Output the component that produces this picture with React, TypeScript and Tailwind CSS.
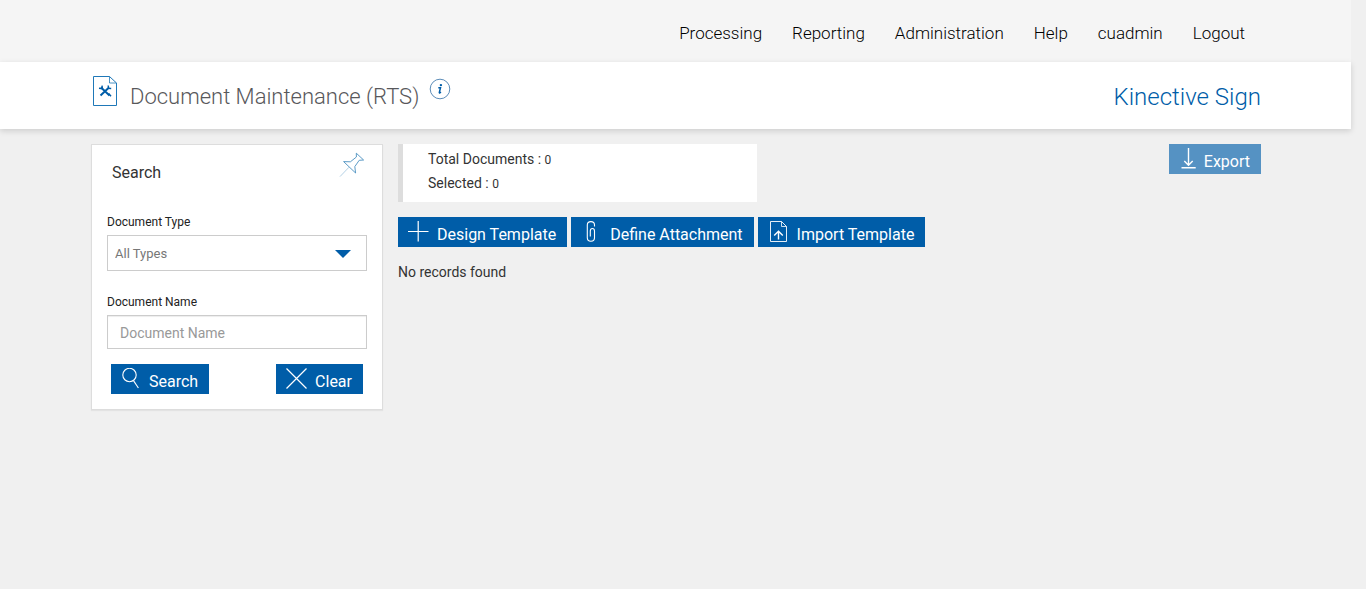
import { useState } from 'react'
import type { ReactNode } from 'react'

const navItems = ['Processing', 'Reporting', 'Administration', 'Help', 'cuadmin', 'Logout']

const documentTypes = ['All Types', 'Template', 'Attachment']

function IconButton({
  icon,
  children,
  type = 'button',
  disabled = false,
  onClick,
}: {
  icon: ReactNode
  children: ReactNode
  type?: 'button' | 'submit'
  disabled?: boolean
  onClick?: () => void
}) {
  return (
    <button
      type={type}
      disabled={disabled}
      onClick={onClick}
      className="flex h-[30px] items-start gap-2 bg-[#005da8] pr-[11px] pl-[10px] text-base text-white hover:bg-[#004c8a] disabled:bg-[#5592c3]"
    >
      <span className="mt-1">{icon}</span>
      <span className="mt-1 leading-7">{children}</span>
    </button>
  )
}

function ToolsDocumentIcon() {
  return (
    <svg width="26" height="30" viewBox="0 0 26 30" fill="none" stroke="#1f78b8" aria-hidden="true">
      <path d="M1.5 .5H17.5L24.5 7V29.5H1.5Z" />
      <path d="M17.5 .5V7H24.5" strokeWidth=".8" />
      <path d="M9 11.5L17.5 19.5M17 11.5L8.5 19.5" stroke="#005da8" strokeWidth="2" />
      <path d="M7 12.2L10.3 12.6L10 9.6M16.2 9.5L16.6 12.2L19.2 12.4M16.6 17.6L19 20.2" stroke="#005da8" strokeWidth="1.5" />
    </svg>
  )
}

function InfoIcon() {
  return (
    <svg width="22" height="22" viewBox="0 0 22 22" fill="none" aria-hidden="true">
      <circle cx="11" cy="11" r="9.8" stroke="#4a7fb0" strokeWidth=".9" />
      <circle cx="11.9" cy="7.1" r="1.2" fill="#005da8" />
      <path d="M9.3 9.8H11.5L10.3 14.6Q10.3 15.4 12 14.2" stroke="#005da8" strokeWidth="1.5" />
    </svg>
  )
}

function PinIcon() {
  return (
    <svg width="26" height="26" viewBox="0 0 26 26" fill="none" stroke="#4a90c0" strokeWidth=".9" aria-hidden="true">
      <path d="M17.3 1.2L24.6 8L20.2 8.3L15.8 14.6L16.6 21L4.6 9.6L11.4 9.8L17.4 5Z" />
      <path d="M10 15.2L1 24.6" strokeOpacity=".6" strokeWidth=".7" />
    </svg>
  )
}

function SearchIcon() {
  return (
    <svg width="20" height="22" viewBox="0 0 20 22" fill="none" stroke="currentColor" strokeWidth="1.1" aria-hidden="true">
      <circle cx="8.5" cy="7" r="6.7" />
      <path d="M12.5 12.6L17.4 20" />
    </svg>
  )
}

function ClearIcon() {
  return (
    <svg width="21" height="22" viewBox="0 0 21 22" fill="none" stroke="currentColor" strokeWidth="1.2" aria-hidden="true">
      <path d="M.5 .5L20.5 20.5M20.5 .5L.5 20.5" />
    </svg>
  )
}

function PlusIcon() {
  return (
    <svg width="21" height="22" viewBox="0 0 21 22" fill="none" stroke="currentColor" strokeWidth="1.2" aria-hidden="true">
      <path d="M0 10.5H20.5M10.2 0V20.5" />
    </svg>
  )
}

function ClipIcon() {
  return (
    <svg width="21" height="22" viewBox="0 0 21 22" fill="none" stroke="currentColor" strokeWidth="1.1" aria-hidden="true">
      <path d="M13.5 5.5V4Q13.5 .6 9.9 .6Q6.3 .6 6.3 4V16.8Q6.3 20.2 9.9 20.2Q13.5 20.2 13.5 16.8V10Q13.5 7.5 11.4 7.5Q9.3 7.5 9.3 10V15.5" />
    </svg>
  )
}

function ImportIcon() {
  return (
    <svg width="21" height="22" viewBox="0 0 21 22" fill="none" stroke="currentColor" aria-hidden="true">
      <path d="M2.5 .5H13.5L18.5 5.5V20.5H2.5Z" strokeWidth=".9" />
      <path d="M13.5 .5V5.5H18.5" strokeWidth=".8" />
      <path d="M10.5 18.5V10.5M6.2 14.5L10.5 10.2L14.8 14.5" strokeWidth="1.4" />
    </svg>
  )
}

function ExportIcon() {
  return (
    <svg width="17" height="22" viewBox="0 0 17 22" fill="none" stroke="currentColor" strokeWidth="1.4" aria-hidden="true">
      <path d="M9.5 0V17M5.3 13L9.5 17.3L13.7 13M2.5 19.8H16.7" />
    </svg>
  )
}

export default function App() {
  const [documentType, setDocumentType] = useState('All Types')
  const [documentName, setDocumentName] = useState('')

  const handleClear = () => {
    setDocumentType('All Types')
    setDocumentName('')
  }

  return (
    <div className="min-h-screen bg-[#f0f0f0] pr-[15px] font-['Roboto',sans-serif] text-sm text-[#333]">
      {/* Top navigation */}
      <header className="bg-[#f5f5f5]">
        <nav className="mx-auto flex h-[62px] max-w-[1171px] items-center justify-end gap-[30px] px-4 pt-1 text-[17px] font-light text-black">
          {navItems.map((item) => (
            <a key={item} href="#" className="hover:text-[#005da8]">
              {item}
            </a>
          ))}
        </nav>
      </header>

      {/* Page title */}
      <div className="relative bg-white shadow-[0_2px_6px_rgba(0,0,0,0.15)]">
        <div className="mx-auto flex h-[67px] max-w-[1171px] items-center justify-between pt-[3px] pl-px">
          <div className="flex items-center">
            <div className="mb-3 ml-[1px]">
              <ToolsDocumentIcon />
            </div>
            <h1 className="ml-3 text-[22px] font-light text-[#58585b]">Document Maintenance (RTS)</h1>
            <button type="button" aria-label="Page information" className="mb-4 ml-[10px]">
              <InfoIcon />
            </button>
          </div>
          <a href="#" className="text-2xl font-light text-[#005da8]">
            Kinective Sign
          </a>
        </div>
      </div>

      <div className="mx-auto flex max-w-[1171px] items-start gap-[15px] pt-[15px] pl-px">
        {/* Search panel */}
        <form
          onSubmit={(e) => e.preventDefault()}
          className="w-[292px] shrink-0 border border-[#ddd] bg-white px-[15px] pb-[15px] shadow-[0_1px_1px_rgba(0,0,0,0.05)]"
        >
          <div className="flex h-[66px] items-start justify-between pl-[5px]">
            <h2 className="mt-4 text-base">Search</h2>
            <button type="button" aria-label="Pin search panel" className="mt-[7px] mr-[2px]">
              <PinIcon />
            </button>
          </div>

          <label htmlFor="documentType" className="block pt-[2px] pb-1 text-xs leading-[18px] text-[#222]">
            Document Type
          </label>
          <div className="relative">
            <select
              id="documentType"
              value={documentType}
              onChange={(e) => setDocumentType(e.target.value)}
              className="block h-9 w-full appearance-none border border-[#ccc] bg-white px-[7px] pt-[2px] text-[13px] text-[#777]"
            >
              {documentTypes.map((type) => (
                <option key={type}>{type}</option>
              ))}
            </select>
            <svg width="16" height="8" viewBox="0 0 16 8" className="pointer-events-none absolute top-[15px] right-4" aria-hidden="true">
              <path d="M0 0H16L8 8Z" fill="#005da8" />
            </svg>
          </div>

          <label htmlFor="documentName" className="mt-5 block pt-[2px] pb-1 text-xs leading-[18px] text-[#222]">
            Document Name
          </label>
          <input
            id="documentName"
            type="text"
            value={documentName}
            onChange={(e) => setDocumentName(e.target.value)}
            placeholder="Document Name"
            className="block h-[34px] w-full border border-[#ccc] px-3 pt-[2px] shadow-[inset_0_1px_1px_rgba(0,0,0,0.075)] placeholder:text-[#999]"
          />

          <div className="mt-[15px] flex justify-between px-1">
            <IconButton type="submit" icon={<SearchIcon />}>
              Search
            </IconButton>
            <IconButton icon={<ClearIcon />} onClick={handleClear}>
              Clear
            </IconButton>
          </div>
        </form>

        {/* Results */}
        <main className="min-w-0 flex-1">
          <div className="flex items-start justify-between">
            <div className="h-[58px] w-[359px] border-l-[5px] border-[#ddd] bg-white pt-[3px] pl-[25px] leading-6">
              <p>
                Total Documents : <span className="text-xs">0</span>
              </p>
              <p>
                Selected : <span className="text-xs">0</span>
              </p>
            </div>
            <IconButton disabled icon={<ExportIcon />}>
              Export
            </IconButton>
          </div>

          <div className="mt-[15px] flex gap-1">
            <IconButton icon={<PlusIcon />}>Design Template</IconButton>
            <IconButton icon={<ClipIcon />}>Define Attachment</IconButton>
            <IconButton icon={<ImportIcon />}>Import Template</IconButton>
          </div>

          <p className="mt-[15px]">No records found</p>
        </main>
      </div>
    </div>
  )
}
